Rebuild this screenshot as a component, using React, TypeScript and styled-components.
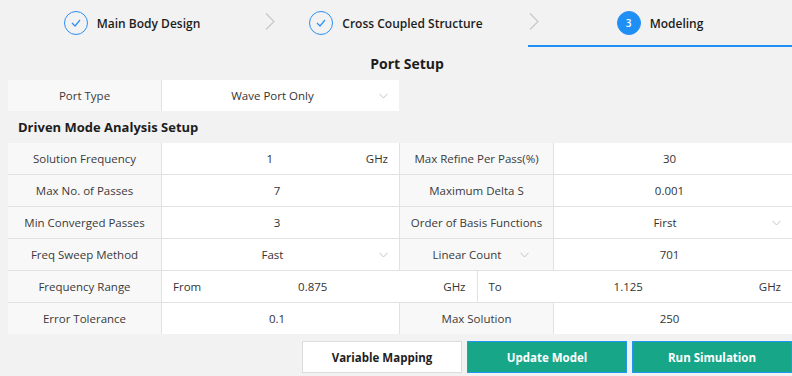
import React from 'react'
import styled, {createGlobalStyle} from 'styled-components'

const GlobalStyle = createGlobalStyle`
  body {
    margin: 0;
    background: #f2f2f2;
    font-family: 'Open Sans', 'Noto Sans', sans-serif;
    color: #333;
  }
`

const Page = styled.div`
  width: 792px;
  height: 376px;
  overflow: hidden;
`

const Steps = styled.div`
  display: grid;
  grid-template-columns: repeat(3, 1fr);
  height: 47px;
`

const Step = styled.div<{$active?: boolean}>`
  position: relative;
  display: flex;
  align-items: center;
  justify-content: center;
  gap: 9px;
  padding-top: 1px;
  border-bottom: 2px solid ${(p) => (p.$active ? '#1e8ff5' : 'transparent')};
  box-sizing: border-box;
`

const Chevron = styled.svg`
  position: absolute;
  left: 1px;
  top: 13px;
`

const Circle = styled.div<{$done?: boolean}>`
  width: 24px;
  height: 24px;
  border-radius: 50%;
  box-sizing: border-box;
  display: flex;
  align-items: center;
  justify-content: center;
  border: 1.5px solid #2b90f5;
  background: ${(p) => (p.$done ? 'transparent' : '#1e8ff5')};
  color: #fff;
  font-size: 10px;
  font-weight: 600;
`

const StepName = styled.span`
  font-size: 12px;
  font-weight: 600;
  color: #1d1d1d;
`

const Title = styled.div`
  font-size: 14px;
  font-weight: 700;
  color: #1d1d1d;
  text-align: center;
  padding: 7px 0 0 22px;
  height: 26px;
`

const Body = styled.div`
  padding-left: 8px;
`

const Table = styled.div<{$cols: string}>`
  display: grid;
  grid-template-columns: ${(p) => p.$cols};
  grid-auto-rows: 31px;
  gap: 1px;
  background: #e2e2e2;
`

const Label = styled.div<{$select?: boolean}>`
  background: #f8f8f8;
  font-size: 11.5px;
  color: #3a3a3a;
  display: flex;
  align-items: center;
  justify-content: center;
  padding: ${(p) => (p.$select ? '0 24px 0 14px' : '0')};
`

const Value = styled.div`
  background: #fff;
  font-size: 11.5px;
  color: #333;
  display: flex;
  align-items: center;
  padding: 0 11px 0 4px;
`

const Split = styled.div`
  grid-column: span 3;
  display: grid;
  grid-template-columns: 1fr 1fr;
  gap: 1px;
`

const Text = styled.span`
  flex: 1;
  text-align: center;
`

const Prefix = styled.span`
  width: 44px;
  padding-left: 7px;
`

const Unit = styled.span<{$wide?: boolean}>`
  width: ${(p) => (p.$wide ? '57px' : 'auto')};
  text-align: right;
`

const Section = styled.div`
  font-size: 13px;
  font-weight: 700;
  color: #1d1d1d;
  height: 32px;
  display: flex;
  align-items: center;
  padding-left: 10px;
`

const Actions = styled.div`
  display: flex;
  justify-content: flex-end;
  gap: 5px;
  margin-top: 7px;
`

const Button = styled.button<{$primary?: boolean}>`
  width: 160px;
  height: 32px;
  box-sizing: border-box;
  font-family: inherit;
  font-size: 11.5px;
  font-weight: 700;
  border: 1px solid ${(p) => (p.$primary ? '#2196f3' : '#dcdcdc')};
  background: ${(p) => (p.$primary ? '#18a689' : '#fff')};
  color: ${(p) => (p.$primary ? '#fff' : '#1d1d1d')};
`

const Caret = () => (
  <svg width="9" height="6" viewBox="0 0 9 6">
    <path d="M0.5 0.8 L4.5 5 L8.5 0.8" fill="none" stroke="#c4c4c4" strokeWidth="1" />
  </svg>
)

const Check = () => (
  <svg width="10" height="8" viewBox="0 0 10 8">
    <path d="M1 4 L4 7 L9 1" fill="none" stroke="#2b90f5" strokeWidth="1.2" />
  </svg>
)

const Sep = () => (
  <Chevron width="10" height="17" viewBox="0 0 10 17">
    <path d="M1 0.5 L9 8.5 L1 16.5" fill="none" stroke="#c8c8c8" strokeWidth="1.2" />
  </Chevron>
)

const Select = ({children}: {children: React.ReactNode}) => (
  <Value>
    <Text>{children}</Text>
    <Caret />
  </Value>
)

const Input = ({value, unit}: {value: string; unit?: string}) => (
  <Value style={unit ? {paddingLeft: 12} : undefined}>
    <Text>{value}</Text>
    {unit && <Unit>{unit}</Unit>}
  </Value>
)

const Ranged = ({prefix, value}: {prefix: string; value: string}) => (
  <Value>
    <Prefix>{prefix}</Prefix>
    <Text>{value}</Text>
    <Unit $wide>GHz</Unit>
  </Value>
)

export default function App() {
  return (
    <Page>
      <GlobalStyle />
      <Steps>
        <Step>
          <Circle $done>
            <Check />
          </Circle>
          <StepName>Main Body Design</StepName>
        </Step>
        <Step>
          <Sep />
          <Circle $done>
            <Check />
          </Circle>
          <StepName>Cross Coupled Structure</StepName>
        </Step>
        <Step $active>
          <Sep />
          <Circle>3</Circle>
          <StepName>Modeling</StepName>
        </Step>
      </Steps>
      <Title>Port Setup</Title>
      <Body>
        <Table $cols="153px 237px" style={{width: 391}}>
          <Label>Port Type</Label>
          <Select>Wave Port Only</Select>
        </Table>
        <Section>Driven Mode Analysis Setup</Section>
        <Table $cols="153px 237px 153px 1fr">
          <Label>Solution Frequency</Label>
          <Input value="1" unit="GHz" />
          <Label>Max Refine Per Pass(%)</Label>
          <Input value="30" />

          <Label>Max No. of Passes</Label>
          <Input value="7" />
          <Label>Maximum Delta S</Label>
          <Input value="0.001" />

          <Label>Min Converged Passes</Label>
          <Input value="3" />
          <Label>Order of Basis Functions</Label>
          <Select>First</Select>

          <Label>Freq Sweep Method</Label>
          <Select>Fast</Select>
          <Label $select>
            <Text>Linear Count</Text>
            <Caret />
          </Label>
          <Input value="701" />

          <Label>Frequency Range</Label>
          <Split>
            <Ranged prefix="From" value="0.875" />
            <Ranged prefix="To" value="1.125" />
          </Split>

          <Label>Error Tolerance</Label>
          <Input value="0.1" />
          <Label>Max Solution</Label>
          <Input value="250" />
        </Table>
        <Actions>
          <Button>Variable Mapping</Button>
          <Button $primary>Update Model</Button>
          <Button $primary>Run Simulation</Button>
        </Actions>
      </Body>
    </Page>
  )
}
